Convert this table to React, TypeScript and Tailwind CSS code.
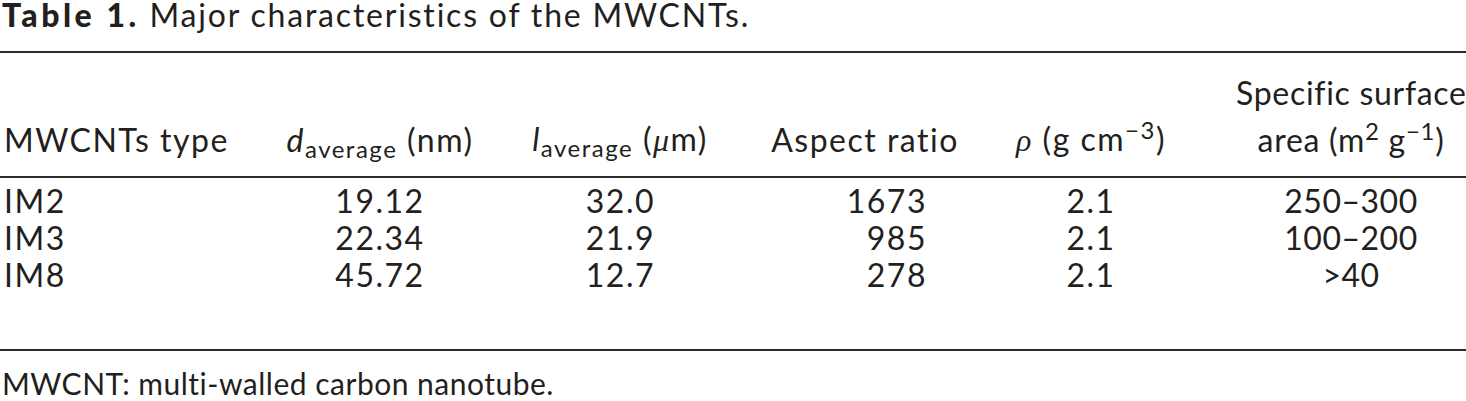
const rows = [
  { type: 'IM2', d: '19.12', l: '32.0', ar: '1673', rho: '2.1', ssa: '250–300' },
  { type: 'IM3', d: '22.34', l: '21.9', ar: '985', rho: '2.1', ssa: '100–200' },
  { type: 'IM8', d: '45.72', l: '12.7', ar: '278', rho: '2.1', ssa: '>40' },
];

const cols = 'grid grid-cols-[260px_240px_240px_250px_202px_274px]';

export default function App() {
  return (
    <div className="w-[1466px] h-[401px] overflow-hidden bg-white text-[#231f20] font-['Lato',_'Liberation_Sans',_sans-serif]">
      {/* Caption */}
      <div className="pl-[2px] text-[32px] leading-[30px] whitespace-nowrap">
        <span className="font-black tracking-[3.5px]">Table 1.</span>
        <span className="tracking-[1.8px]"> Major characteristics of the MWCNTs.</span>
      </div>

      <div className="mt-[21px] border-t-2 border-b-2 border-[#2b2b2b] text-[32px] tracking-[1.5px]">
        {/* Header */}
        <div className={`${cols} items-end border-b-2 border-[#2b2b2b] pt-[21px] pb-[17px] leading-[38px] whitespace-nowrap`}>
          <div className="pl-[4px]">MWCNTs type</div>
          <div className="text-center">
            <i>d</i>
            <sub>average</sub> (nm)
          </div>
          <div className="text-center">
            <i>l</i>
            <sub>average</sub> (<i className="font-['Liberation_Serif',_serif]">μ</i>m)
          </div>
          <div className="text-center">Aspect ratio</div>
          <div className="text-center">
            <i className="font-['Liberation_Serif',_serif]">ρ</i> (g cm<sup>−3</sup>)
          </div>
          <div className="pl-[44px] text-center flex flex-col gap-[9px] tracking-[0.7px]">
            <div>Specific surface</div>
            <div>
              area (m<sup>2</sup> g<sup>−1</sup>)
            </div>
          </div>
        </div>

        {/* Body */}
        <div className="pt-[4px] pb-[56px] leading-[37px] tabular-nums">
          {rows.map((r) => (
            <div key={r.type} className={cols}>
              <div className="pl-[4px]">{r.type}</div>
              <div className="text-center">{r.d}</div>
              <div className="text-right pr-[85px]">{r.l}</div>
              <div className="text-right pr-[63px]">{r.ar}</div>
              <div className="text-center">{r.rho}</div>
              <div className="pl-[44px] text-center tracking-[0.5px]">{r.ssa}</div>
            </div>
          ))}
        </div>
      </div>

      {/* Footnote */}
      <div className="mt-[15px] pl-[2px] text-[30px] leading-[35px] tracking-[0.5px] whitespace-nowrap">
        MWCNT: multi-walled carbon nanotube.
      </div>
    </div>
  );
}
